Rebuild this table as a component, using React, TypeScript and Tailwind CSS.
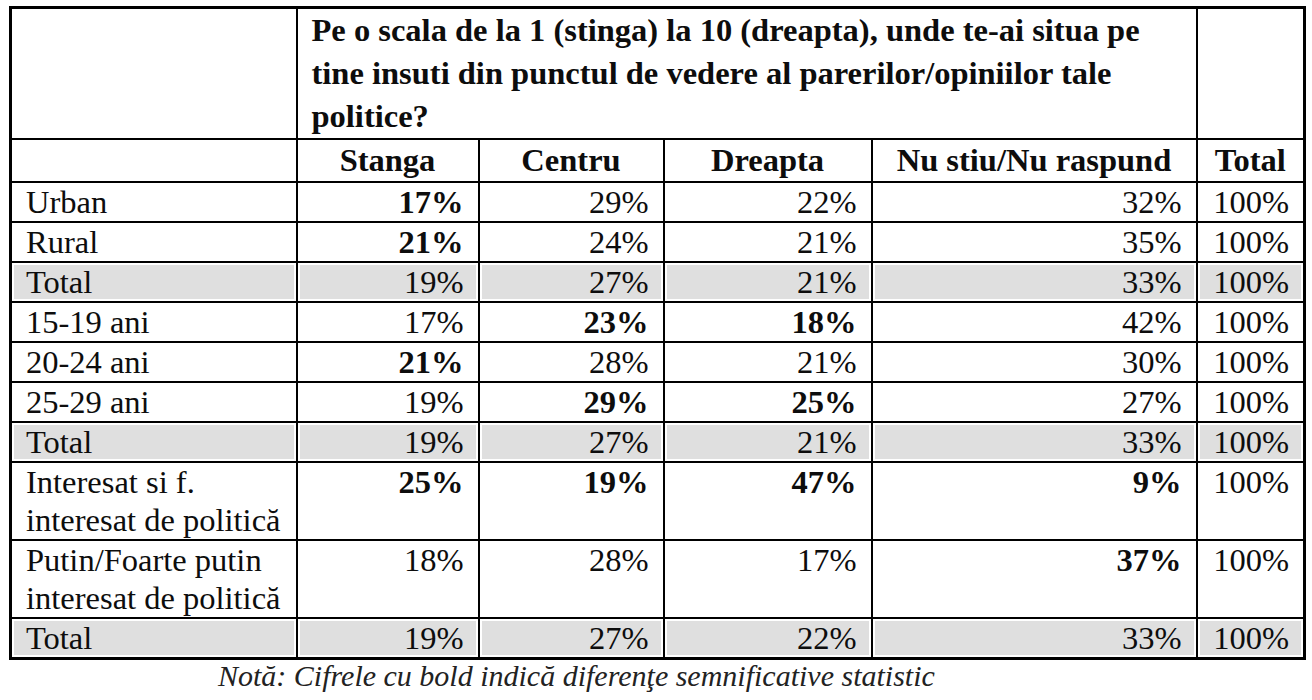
import React from 'react';

type Cell = { v: string; b?: boolean };
type Row = { label: string[]; cells: Cell[]; total?: boolean };

const c = (v: string, b = false): Cell => ({ v, b });

const rows: Row[] = [
  { label: ['Urban'], cells: [c('17%', true), c('29%'), c('22%'), c('32%'), c('100%')] },
  { label: ['Rural'], cells: [c('21%', true), c('24%'), c('21%'), c('35%'), c('100%')] },
  { label: ['Total'], cells: [c('19%'), c('27%'), c('21%'), c('33%'), c('100%')], total: true },
  { label: ['15-19 ani'], cells: [c('17%'), c('23%', true), c('18%', true), c('42%'), c('100%')] },
  { label: ['20-24 ani'], cells: [c('21%', true), c('28%'), c('21%'), c('30%'), c('100%')] },
  { label: ['25-29 ani'], cells: [c('19%'), c('29%', true), c('25%', true), c('27%'), c('100%')] },
  { label: ['Total'], cells: [c('19%'), c('27%'), c('21%'), c('33%'), c('100%')], total: true },
  {
    label: ['Interesat si f.', 'interesat de politică'],
    cells: [c('25%', true), c('19%', true), c('47%', true), c('9%', true), c('100%')],
  },
  {
    label: ['Putin/Foarte putin', 'interesat de politică'],
    cells: [c('18%'), c('28%'), c('17%'), c('37%', true), c('100%')],
  },
  { label: ['Total'], cells: [c('19%'), c('27%'), c('22%'), c('33%'), c('100%')], total: true },
];

const headers = ['Stanga', 'Centru', 'Dreapta', 'Nu stiu/Nu raspund', 'Total'];

const App = () => {
  const grey = 'bg-[#dfdfdf] shadow-[inset_0_0_0_2px_#ffffff]';

  return (
    <div className="min-h-screen bg-white text-[#0d0d0d] font-['Liberation_Serif',serif] pt-[6px] pl-[9px]">
      <table className="table-fixed border-collapse w-[1294px] border-[3px] border-black">
        <colgroup>
          <col className="w-[286px]" />
          <col className="w-[182px]" />
          <col className="w-[185px]" />
          <col className="w-[208px]" />
          <col className="w-[325px]" />
          <col className="w-[108px]" />
        </colgroup>
        <tbody>
          {/* Question row */}
          <tr>
            <td className="border-2 border-black" />
            <td colSpan={4} className="border-2 border-black px-[14px] text-[32.5px] leading-[43px] font-bold align-top whitespace-nowrap">
              Pe o scala de la 1 (stinga) la 10 (dreapta), unde te-ai situa pe
              <br />
              tine insuti din punctul de vedere al parerilor/opiniilor tale
              <br />
              politice?
            </td>
            <td className="border-2 border-black" />
          </tr>

          {/* Column headers */}
          <tr>
            <td className="border-2 border-black" />
            {headers.map((h) => (
              <td key={h} className="border-2 border-black px-[4px] text-center text-[32.5px] leading-[41px] font-bold whitespace-nowrap">
                {h}
              </td>
            ))}
          </tr>

          {rows.map((row, i) => (
            <tr key={i}>
              <td className={`border-2 border-black px-[14px] text-[32.5px] leading-[38px] align-top whitespace-nowrap ${row.total ? grey : ''}`}>
                {row.label.map((l) => (
                  <div key={l}>{l}</div>
                ))}
              </td>
              {row.cells.map((cell, j) => (
                <td
                  key={j}
                  className={`border-2 border-black px-[14px] text-right text-[32.5px] leading-[38px] align-top ${
                    cell.b ? 'font-bold' : ''
                  } ${row.total ? grey : ''}`}
                >
                  {cell.v}
                </td>
              ))}
            </tr>
          ))}
        </tbody>
      </table>

      <p className="pl-[209px] text-[30px] leading-[32px] italic text-[#222]">
        Notă: Cifrele cu bold indică diferenţe semnificative statistic
      </p>
    </div>
  );
};

export default App;
